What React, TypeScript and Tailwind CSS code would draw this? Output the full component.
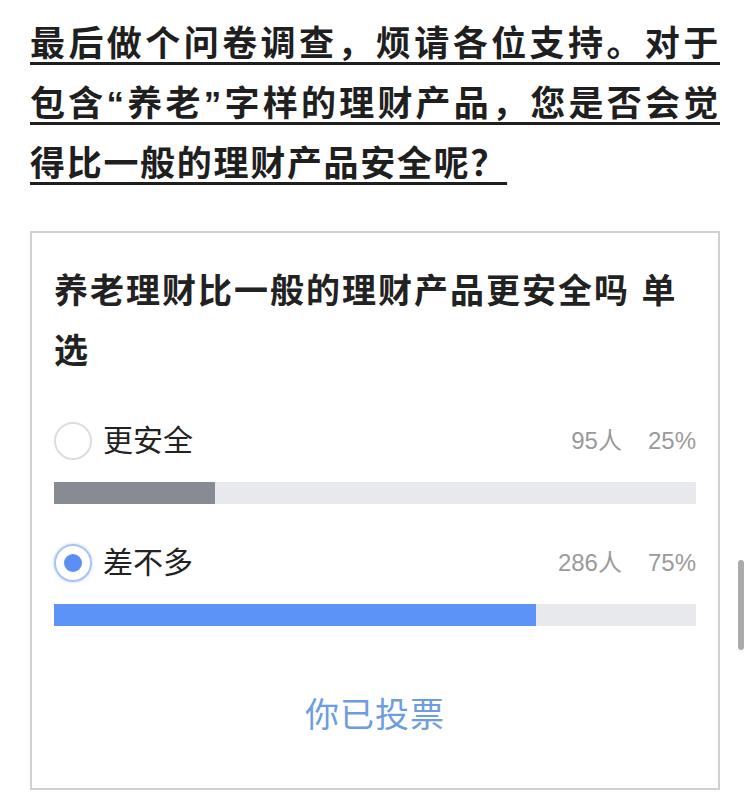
import React from "react";

type Option = {
  label: string;
  count: number;
  percent: number;
  selected: boolean;
};

const OPTIONS: Option[] = [
  { label: "更安全", count: 95, percent: 25, selected: false },
  { label: "差不多", count: 286, percent: 75, selected: true },
];

const FONT = '"Liberation Sans", "Noto Sans CJK SC", sans-serif';

// ─── Radio dot ────────────────────────────────────────────────────────────────

const Radio: React.FC<{ checked: boolean }> = ({ checked }) =>
  checked ? (
    <span className="w-[38px] h-[38px] rounded-full border-2 border-[#a8c4f3] shadow-[0_0_3px_rgba(90,140,240,0.45)] flex items-center justify-center flex-shrink-0">
      <span className="w-[18px] h-[18px] rounded-full bg-[#5b8ff5]" />
    </span>
  ) : (
    <span className="w-[38px] h-[38px] rounded-full border-2 border-[#dcdcdc] flex-shrink-0" />
  );

// ─── Poll option ──────────────────────────────────────────────────────────────

const PollOption: React.FC<{ option: Option }> = ({ option }) => (
  <div>
    <div className="h-[50px] flex items-center">
      <Radio checked={option.selected} />
      <span className="ml-[11px] text-[30px] text-[#222] leading-none">{option.label}</span>
      <span className="ml-auto text-[24px] text-[#9a9a9a] leading-none">
        {option.count}人
        <span className="ml-[26px]">{option.percent}%</span>
      </span>
    </div>
    <div className="mt-[16px] h-[22px] bg-[#e8e9ec]">
      <div
        className={`h-full ${option.selected ? "bg-[#5b93f7]" : "bg-[#878b94]"}`}
        style={{ width: `${option.percent}%` }}
      />
    </div>
  </div>
);

export default function App() {
  return (
    <div className="relative w-[750px] h-[796px] bg-white overflow-hidden" style={{ fontFamily: FONT }}>
      {/* Question text */}
      <p className="mx-[30px] pt-[14px] text-[35px] leading-[60px] font-bold text-[#1f1f1f] text-justify tracking-[1.7px] underline decoration-[3px] underline-offset-[6px] decoration-[#1f1f1f]">
        最后做个问卷调查，烦请各位支持。对于包含“养老”字样的理财产品，您是否会觉得比一般的理财产品安全呢？{" "}
      </p>

      {/* Poll card */}
      <div className="mx-[30px] mt-[37px] border-2 border-[#d0d0d0] px-[22px] pt-[28px] pb-[48px]">
        <h2 className="text-[34px] leading-[60px] font-semibold text-[#222] tracking-[2px]">
          养老理财比一般的理财产品更安全吗 单选
        </h2>

        <div className="mt-[35px] flex flex-col gap-[34px]">
          {OPTIONS.map((o) => (
            <PollOption key={o.label} option={o} />
          ))}
        </div>

        <div className="mt-[64px] h-[50px] flex items-center justify-center text-[34px] text-[#6d9de0] tracking-[1px]">
          你已投票
        </div>
      </div>

      {/* Scroll indicator */}
      <div className="absolute left-[738px] top-[560px] w-[6px] h-[90px] rounded-full bg-[#ababab]" />
    </div>
  );
}
